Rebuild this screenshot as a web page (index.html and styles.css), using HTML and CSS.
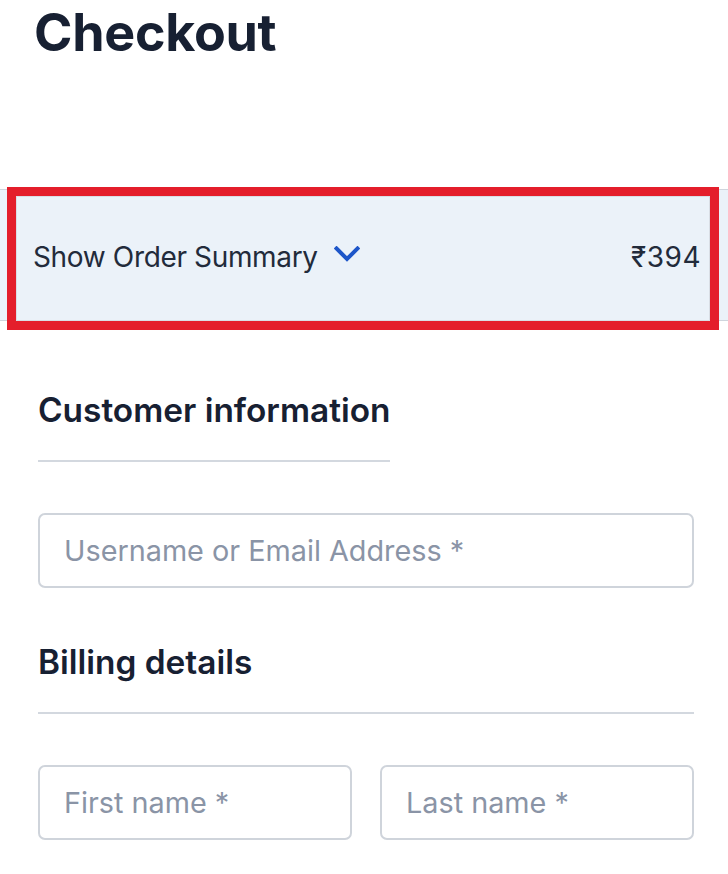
FILE: index.html
```html
<!DOCTYPE html>
<html lang="en">
<head>
<meta charset="utf-8">
<title>Checkout</title>
<link rel="stylesheet" href="styles.css">
</head>
<body>
<h1 class="page-title">Checkout</h1>

<section class="order-summary">
  <button class="summary-toggle" type="button">
    <span class="summary-label">Show Order Summary</span>
    <svg class="chevron" width="26" height="16" viewBox="0 0 26 16" aria-hidden="true">
      <path d="M2.5 2.5 L13 13 L23.5 2.5" fill="none" stroke="#1d56c9" stroke-width="4" stroke-linecap="square" stroke-linejoin="miter"/>
    </svg>
  </button>
  <span class="summary-total">₹394</span>
  <div class="highlight"></div>
</section>

<main class="checkout-form">
  <div class="form-section">
    <h2 class="section-title inline">Customer information</h2>
    <div class="field">
      <input class="text-input" type="text" placeholder="Username or Email Address *">
    </div>
  </div>

  <div class="form-section">
    <h2 class="section-title">Billing details</h2>
    <div class="field-row">
      <input class="text-input" type="text" placeholder="First name *">
      <input class="text-input" type="text" placeholder="Last name *">
    </div>
  </div>
</main>
</body>
</html>
```

FILE: styles.css
```css
* {
  box-sizing: border-box;
}

html, body {
  margin: 0;
  padding: 0;
  background: #ffffff;
}

body {
  font-family: Inter, "Noto Sans", "Liberation Sans", sans-serif;
  color: #172032;
}

.page-title {
  margin: 0;
  padding: 2px 0 0 34px;
  font-size: 52px;
  line-height: 62px;
  font-weight: 700;
  letter-spacing: -0.3px;
  color: #172032;
}

.order-summary {
  position: relative;
  margin-top: 125px;
  height: 132px;
  display: flex;
  align-items: center;
  justify-content: space-between;
  padding: 3px 27px 0 33px;
  background: #ebf2f9;
  border-top: 1px solid #cfd5dd;
  border-bottom: 1px solid #cfd5dd;
}

.summary-toggle {
  display: flex;
  align-items: center;
  gap: 16px;
  padding: 0;
  margin: 0;
  border: 0;
  background: none;
  font: inherit;
  color: #222b3b;
  cursor: pointer;
}

.summary-label {
  font-size: 28px;
  line-height: 32px;
  letter-spacing: -0.35px;
  color: #222b3b;
}

.chevron {
  display: block;
  margin-top: -5px;
}

.summary-total {
  font-size: 28px;
  line-height: 32px;
  letter-spacing: 0.5px;
  color: #222b3b;
}

.highlight {
  position: absolute;
  left: 7px;
  top: -3px;
  width: 712px;
  height: 143px;
  border: 9px solid #e41e2b;
  box-shadow: inset 0 0 0 1px #d9dee5;
  pointer-events: none;
}

.checkout-form {
  padding: 0 34px 0 38px;
}

.form-section {
  display: flex;
  flex-direction: column;
  align-items: flex-start;
}

.section-title {
  align-self: stretch;
  margin: 0;
  padding-bottom: 30px;
  font-size: 33.4px;
  line-height: 40px;
  font-weight: 600;
  color: #172032;
  border-bottom: 2px solid #d3d8df;
}

.section-title.inline {
  align-self: flex-start;
}

.form-section:first-child .section-title {
  margin-top: 69px;
}

.form-section + .form-section .section-title {
  margin-top: 54px;
}

.field {
  align-self: stretch;
  margin-top: 51px;
}

.field-row {
  align-self: stretch;
  margin-top: 51px;
  display: grid;
  grid-template-columns: 1fr 1fr;
  gap: 28px;
}

.text-input {
  display: block;
  width: 100%;
  height: 75px;
  padding: 0 24px;
  border: 2px solid #cfd4db;
  border-radius: 7px;
  background: #ffffff;
  font-family: inherit;
  font-size: 28.8px;
  color: #172032;
  outline: none;
}

.text-input::placeholder {
  color: #8a94a6;
  opacity: 1;
}
```
